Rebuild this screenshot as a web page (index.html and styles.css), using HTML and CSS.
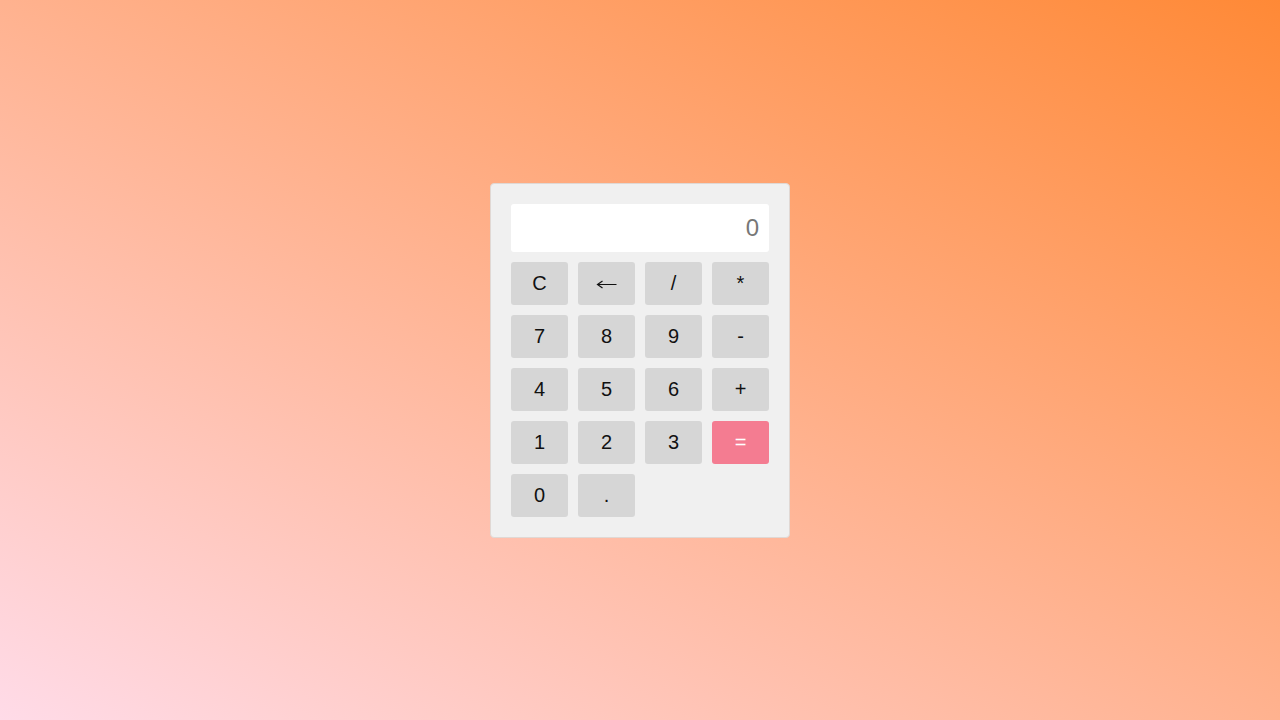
FILE: index.html
```html
<!DOCTYPE html>
<html>
<head>
<meta charset="utf-8">
<link rel="stylesheet" href="styles.css">
</head>
<body>
<div class="calc">
  <div class="display">0</div>
  <div class="keys">
    <button class="key">C</button>
    <button class="key" aria-label="←"><svg class="arrow" width="21" height="9" viewBox="0 0 21 9"><path d="M1.5 4.5H20.5M6.5 1L1.5 4.5L6.5 8" fill="none" stroke="#111" stroke-width="1.2"/></svg></button>
    <button class="key">/</button>
    <button class="key">*</button>
    <button class="key">7</button>
    <button class="key">8</button>
    <button class="key">9</button>
    <button class="key">-</button>
    <button class="key">4</button>
    <button class="key">5</button>
    <button class="key">6</button>
    <button class="key">+</button>
    <button class="key">1</button>
    <button class="key">2</button>
    <button class="key">3</button>
    <button class="key eq">=</button>
    <button class="key">0</button>
    <button class="key">.</button>
  </div>
</div>
</body>
</html>
```
FILE: styles.css
```css
html, body {
  margin: 0;
  height: 100%;
}
body {
  background: linear-gradient(to top right, #ffdbe8, #ff8936);
  font-family: "Liberation Sans", Arial, sans-serif;
  display: flex;
  align-items: center;
  justify-content: center;
}
.calc {
  width: 258px;
  padding: 20px;
  background: #f0f0f0;
  border: 1px solid #e0d8d4;
  border-radius: 4px;
  margin-top: 1px;
}
.display {
  height: 48px;
  background: #fff;
  border-radius: 3px;
  box-sizing: border-box;
  padding: 0 10px;
  display: flex;
  align-items: center;
  justify-content: flex-end;
  font-size: 24px;
  color: #777;
  margin-bottom: 10px;
}
.keys {
  display: grid;
  grid-template-columns: repeat(4, 57px);
  grid-auto-rows: 43px;
  gap: 10px;
}
.key {
  border: none;
  border-radius: 3px;
  background: #d6d6d6;
  font-family: "Liberation Sans", Arial, sans-serif;
  font-size: 20px;
  color: #111;
  padding: 0;
  display: flex;
  align-items: center;
  justify-content: center;
}
.arrow {
  display: block;
  margin-top: 2px;
}
.key.eq {
  background: #f47c91;
  color: #fff;
}
```
